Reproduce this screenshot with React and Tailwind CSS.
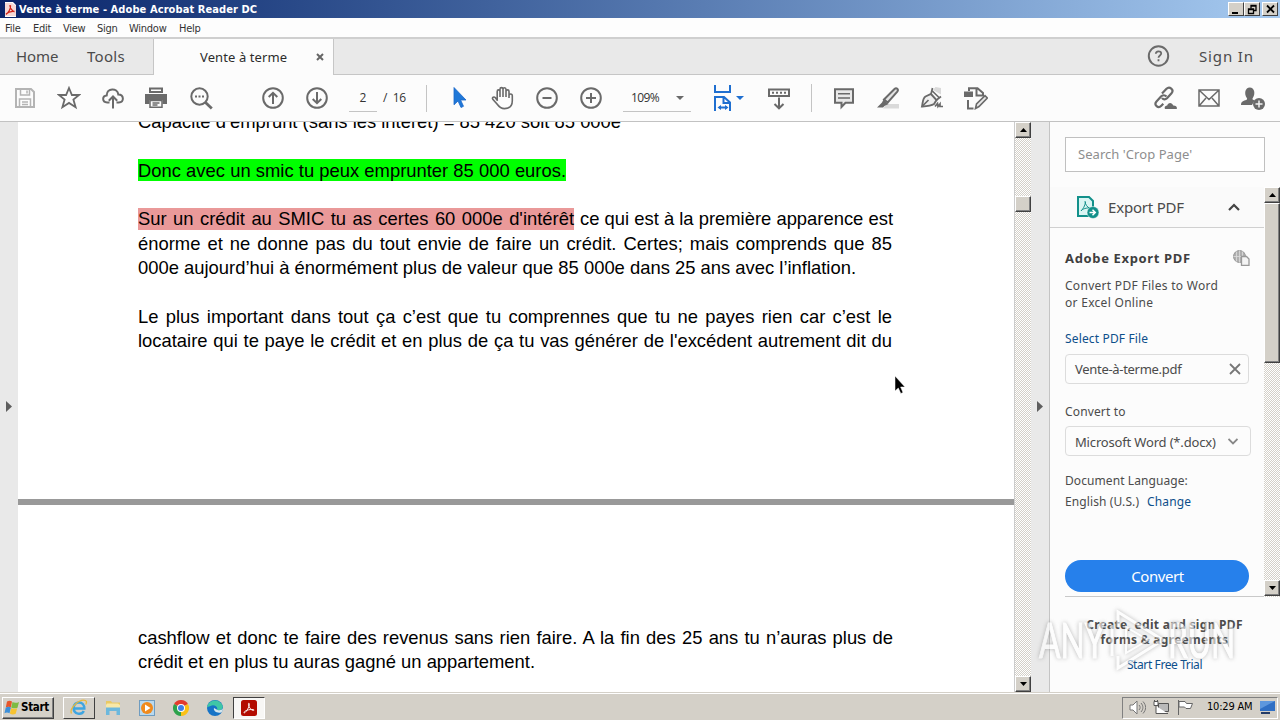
const Svg = ({ w = 24, h = 24, className = '', children }) => (
  <svg width={w} height={h} viewBox={`0 0 ${w} ${h}`} fill="none" stroke="currentColor" strokeWidth="2" className={`shrink-0 ${className}`}>
    {children}
  </svg>
)

const Slot = ({ children, className = '' }) => (
  <div className={`flex w-11 shrink-0 items-center justify-center ${className}`}>{children}</div>
)

const AcrobatMark = ({ size = 16 }) => (
  <svg width={size} height={size} viewBox="0 0 16 16" className="shrink-0">
    <rect width="16" height="16" rx="2.5" fill="#b30b00" />
    <path d="M3 12.2c1-1.5 4.8-3 9.3-2.7.9.1.9 1.1 0 1-2-.2-4.6-3-4.9-6.300-.1-1.300 1-1.300 1 0C8.300 7 5.600 11.500 4 12.600c-.6.4-1.300.2-1-.4z" fill="none" stroke="#fff" strokeWidth="0.9" />
  </svg>
)

const TitleBar = () => (
  <div className="flex h-[18px] items-center bg-gradient-to-r from-[#0a246a] to-[#a6caf0] pr-0.5 pl-1">
    <svg width="13" height="15" viewBox="0 0 13 15" className="shrink-0">
      <path d="M1 0h8l3 3v12H1z" fill="#fff" />
      <path d="M1 1h7l4 3v10H1z" fill="#f6d9d6" />
      <path d="M2 12c1.500-1.500 5-3 8.500-2.600M6 3c-.3 3 2 6 4.500 6.800M6.500 3.500C7 7 4 11 2 12.500" stroke="#d2261a" strokeWidth="1.300" fill="none" />
    </svg>
    <span className="ml-[2px] font-['DejaVu_Sans_Condensed','DejaVu_Sans',sans-serif] text-[11px] leading-none font-bold tracking-[0.090px] whitespace-nowrap text-white">
      Vente à terme - Adobe Acrobat Reader DC
    </span>
    <div className="ml-auto flex items-center">
      <WinButton>
        <path d="M3 10h6" strokeWidth="2" />
      </WinButton>
      <WinButton>
        <path d="M6 5.500V2.500h5v5H9M6 3h5" strokeWidth="1.300" />
        <path d="M3.500 6h5v4.500h-5zM3 6.500h6" strokeWidth="1.300" />
      </WinButton>
      <WinButton className="ml-0.5">
        <path d="M4 2.500l7 7M11 2.500l-7 7" strokeWidth="1.800" />
      </WinButton>
    </div>
  </div>
)

const WinButton = ({ children, className = '' }) => (
  <div className={`flex h-3.5 w-4 items-center justify-center border border-t-white border-r-[#404040] border-b-[#404040] border-l-white bg-[#d4d0c8] text-black ${className}`}>
    <svg width="14" height="12" viewBox="0 0 14 12" fill="none" stroke="currentColor" strokeWidth="1">
      {children}
    </svg>
  </div>
)

const MenuBar = () => (
  <div className="flex h-[21px] items-center border-b-2 border-[#cfcfcf] bg-[#fdfdfd] pt-0.5 font-['DejaVu_Sans_Condensed','DejaVu_Sans',sans-serif] text-[11px] leading-none tracking-[-0.25px] whitespace-nowrap text-[#333]">
    <span className="w-7 pl-[5px]">File</span>
    <span className="w-[30px] pl-[5px]">Edit</span>
    <span className="w-[34px] pl-[5px]">View</span>
    <span className="w-8 pl-[5px]">Sign</span>
    <span className="w-[50px] pl-[5px]">Window</span>
    <span className="pl-[5px]">Help</span>
  </div>
)

const TabBar = () => (
  <div className="flex h-9 shrink-0 items-stretch bg-[#e9e9e9] text-[15px] text-[#4b4b4b]">
    <div className="flex w-[154px] items-center border-r border-b border-[#c6c6c6] pl-4">
      <span className="w-[71px] tracking-[-0.1px]">Home</span>
      <span className="tracking-[0.3px]">Tools</span>
    </div>
    <div className="flex w-[179px] items-center bg-[#fcfcfc] text-[13px] text-[#2c2c2c]">
      <span className="ml-[46px] w-[88px] pt-px tracking-[0.1px] whitespace-nowrap">Vente à terme</span>
      <svg width="8" height="8" viewBox="0 0 8 8" className="ml-7 shrink-0" stroke="#666" strokeWidth="2">
        <path d="M1 1l6 6M7 1L1 7" />
      </svg>
    </div>
    <div className="flex flex-1 items-center border-b border-l border-[#c6c6c6]">
      <Svg className="-mt-0.5 ml-[812px] text-[#6a6a6a]">
        <circle cx="12.500" cy="12" r="9.700" />
        <path d="M9.800 9.800c.1-3.300 5.400-3.300 5.400-.3 0 2-2.700 2-2.700 4.300M12.500 15.200v2" strokeWidth="1.800" />
      </Svg>
      <span className="ml-[29px] text-[15px] tracking-[0.850px] whitespace-nowrap">Sign In</span>
    </div>
  </div>
)

const Caret = ({ className = '' }) => (
  <svg width="8" height="4" viewBox="0 0 8 4" className={`shrink-0 ${className}`} fill="currentColor">
    <path d="M0 0h8L4 4z" />
  </svg>
)

const Toolbar = () => (
  <div className="flex h-[47px] shrink-0 items-center border-b border-[#c2c2c2] bg-[#fcfcfc] pl-[3px] text-[#6a6a6a]">
    <Slot>
      <Svg className="text-[#b4b4b4]">
        <path d="M3 3h15l3 3v15H3z" />
        <path d="M7.500 3v6h9V3M14 4.500v3M6.500 21v-8h11v8M9 16h6M9 18.500h6" strokeWidth="1.500" />
      </Svg>
    </Slot>
    <Slot>
      <Svg>
        <path d="M12 2l2.900 7H22l-5.600 4.600 2.200 7.600L12 16.900l-6.600 4.300 2.200-7.600L2 9h7.100z" strokeWidth="1.800" />
      </Svg>
    </Slot>
    <Slot>
      <Svg>
        <path d="M8.500 16.500H6.200C.8 16.200 1 9.800 5.700 9.400 5.600 1.700 16.500 1.500 17.300 8.400c5.800.1 6.200 7.700.5 8.100h-2.300" />
        <path d="M12 22.500V11M7.800 14.800L12 10.500l4.200 4.300" />
      </Svg>
    </Slot>
    <Slot className="-ml-px mr-px">
      <Svg>
        <path d="M6 2.500h12V6H6z" />
        <path d="M1 8h22v10h-4.500v-4h-13v4H1z" fill="currentColor" stroke="none" />
        <path d="M6 14.500h12v6.700H6zM8.500 17h7M8.500 19h5" strokeWidth="1.500" />
      </Svg>
    </Slot>
    <Slot>
      <Svg>
        <circle cx="10.500" cy="10.500" r="8.200" />
        <path d="M16.500 16.500l6.300 6" strokeWidth="2.800" />
        <path d="M6 10.500h2M9.500 10.500h2M13 10.500h2" />
      </Svg>
    </Slot>
    <Slot className="ml-7">
      <Svg>
        <circle cx="12" cy="12" r="9.800" />
        <path d="M12 18V7M7.700 11L12 6.800l4.300 4.200" />
      </Svg>
    </Slot>
    <Slot>
      <Svg>
        <circle cx="12" cy="12" r="9.800" />
        <path d="M12 6v11M7.700 13l4.300 4.200 4.300-4.200" />
      </Svg>
    </Slot>
    <div className="ml-2.5 flex h-7 w-7 items-center justify-center border-b border-[#c4c4c4] font-['Open_Sans',sans-serif] text-xs text-[#333]">2</div>
    <span className="ml-[6px] w-[37px] font-['Open_Sans',sans-serif] text-xs tracking-[-0.3px] whitespace-nowrap text-[#333]">/&nbsp;&nbsp;16</span>
    <div className="ml-[6px] h-[27px] w-px bg-[#c4c4c4]" />
    <Slot className="ml-2.5">
      <Svg>
        <path d="M7 1.500v17.300l4-3.800 3 6.500 2.500-1.200-2.900-6.300H19z" fill="#2078d8" stroke="#1b67c9" strokeWidth="0.800" />
      </Svg>
    </Slot>
    <Slot>
      <Svg>
        <path d="M6.200 14.800V5.500c0-2.200 2.800-2.200 2.800 0V11M9 6V3.300c0-2.200 3-2.200 3 0V11M12 3.500c0-2.300 3-2.300 3 0V11M15 5.500c0-2.200 3-2.200 3 0V12M18 9.500c0-1.900 3.300-2.200 3.300.3v5c0 5-2.500 7.800-7.800 7.800-4 0-5.500-1.800-7.500-4.600L1.800 13.200c-1-1.700 1.200-3 2.400-1.600l2.400 3.200" strokeWidth="1.600" />
      </Svg>
    </Slot>
    <Slot>
      <Svg>
        <circle cx="12" cy="12" r="9.800" />
        <path d="M7.500 12h9" />
      </Svg>
    </Slot>
    <Slot>
      <Svg>
        <circle cx="12" cy="12" r="9.800" />
        <path d="M7 12h10M12 7v10" />
      </Svg>
    </Slot>
    <div className="ml-2.5 flex h-7 w-[68px] items-center border-b border-[#c4c4c4] pl-2 font-['Open_Sans',sans-serif] text-xs tracking-[-0.6px] text-[#333]">
      <span className="w-[45px]">109%</span>
      <Caret className="text-[#6a6a6a]" />
    </div>
    <div className="ml-[22px] flex items-center text-[#1f6fd0]">
      <Svg w={20} h={26}>
        <path d="M2 0v7h15V0M2 26V12h9l6 5.500V26M10.500 12v6H17M6 22.500h8" />
        <path d="M4.500 22.500l3.500-2.500v5zM15.500 22.500L12 20v5z" fill="currentColor" stroke="none" />
      </Svg>
      <Caret className="ml-[3px]" />
    </div>
    <Slot className="ml-[13px]">
      <Svg>
        <path d="M2 3.500h20v6.500H2z" />
        <path d="M5 6.700h2M9 6.700h2M13 6.700h2M17 6.700h2" />
        <path d="M12 11.500v11M7.500 18l4.500 4.300 4.500-4.300" />
      </Svg>
    </Slot>
    <div className="ml-2.5 h-7 w-px bg-[#c4c4c4]" />
    <Slot className="ml-2.5">
      <Svg>
        <path d="M3 3.200h18v13.600h-7.500L9.500 21v-4.200H3z" fill="#e9e9e9" />
        <path d="M6 7.700h12M6 12h12" strokeWidth="1.400" />
      </Svg>
    </Slot>
    <Slot>
      <Svg>
        <path d="M11 18h12v4.500H7z" fill="#dadada" stroke="none" />
        <path d="M8 13.500L18.500 3c2-1.800 4.500.5 2.800 2.700L11.800 16.500z" fill="#e3e3e3" />
        <path d="M7.500 13.500l5 4.500-4 2-1.500 1.500H1l5-5z" fill="currentColor" stroke="none" />
      </Svg>
    </Slot>
    <Slot>
      <Svg>
        <path d="M13 4l2.500-3 5.500 1v6.500z" fill="#dadada" stroke="none" />
        <path d="M2 20.500C3 16 2.500 12.500 5.500 10.500L11 8l5.500 6-2.500 4c-3 2-7 2.200-12 2.500z" fill="#f0f0f0" strokeWidth="1.900" />
        <path d="M2.500 20l6-6M12.500 2l-1.500 6M16.500 14l4.500-3.500M11.800 4.500l7.700 7.500" strokeWidth="1.700" />
        <path d="M15 20.500l2.500-3 .5 3 2-2.500v2.500h3" strokeWidth="1.700" />
      </Svg>
    </Slot>
    <Slot>
      <Svg>
        <rect x="0" y="5.500" width="9" height="5.500" fill="currentColor" stroke="none" />
        <path d="M5 5V2.200h8.500L19 7v2.500H12.500V3M4 14v8.500h5.500" />
        <path d="M11.500 22.500l1-4.500L21 9.700l2.300 2.300-8.300 8.500z" fill="#e9e9e9" strokeWidth="1.600" />
      </Svg>
    </Slot>
    <Slot className="ml-[145px]">
      <Svg>
        <path d="M9 7.500l4.500-4.700c3-3 8 .8 5 4.500l-4.500 5c-1.800 1.700-4 1.300-5-.3M13.500 10.500c-1.500-1.700-4-1.700-5.500 0l-4.500 5c-3 3.500 1.700 7.500 4.800 4.300l2-2" strokeWidth="2.200" />
        <path d="M12 23c-1-2 .5-3.600 2.200-3.500.7-3.500 5-3.500 6 0 2.800-.2 4.300 1.500 3.500 3.500z" fill="currentColor" stroke="none" />
      </Svg>
    </Slot>
    <Slot>
      <Svg>
        <path d="M2 4h20v16H2zM2.500 4.500L12 13.500l9.500-9M2.500 19.500L9 12M21.500 19.500L15 12" strokeWidth="1.500" />
      </Svg>
    </Slot>
    <Slot>
      <Svg>
        <path d="M0 19c0-3.500 2.500-4 5.500-5.200.8-.3.800-1 .3-1.800-3-4.500-1.600-10.600 3-10.600s6 6.100 3 10.600c-.5.8-.5 1.500.3 1.800l1.500.6L11 19z" fill="currentColor" stroke="none" />
        <circle cx="18" cy="18" r="6" fill="currentColor" stroke="none" />
        <path d="M14.500 18h7M18 14.500v7" stroke="#f4f4f4" strokeWidth="1.500" />
      </Svg>
    </Slot>
  </div>
)

const ScrollArrow = ({ up, className = '' }) => (
  <div className={`flex h-4 shrink-0 items-center justify-center border border-t-white border-r-[#404040] border-b-[#404040] border-l-white bg-[#d4d0c8] shadow-[inset_-1px_-1px_0_#808080] ${className}`}>
    <svg width="7" height="4" viewBox="0 0 7 4">
      <path d={up ? 'M0 4h7L3.500 0z' : 'M0 0h7L3.500 4z'} fill="#000" />
    </svg>
  </div>
)

const Thumb = ({ className = '' }) => (
  <div className={`shrink-0 border border-t-white border-r-[#404040] border-b-[#404040] border-l-white bg-[#d4d0c8] shadow-[inset_-1px_-1px_0_#808080] ${className}`} />
)

const Line = ({ children, className = '' }) => (
  <div className={`h-[24.35px] whitespace-nowrap [text-align-last:justify] ${className}`}>{children}</div>
)

const Document = () => (
  <div className="flex w-[996px] shrink-0 flex-col overflow-hidden bg-white font-['Liberation_Sans',Arial,sans-serif] text-[18.400px] leading-[24.350px] text-black">
    <div className="-mt-3 h-[389px] shrink-0 pl-[120px]">
      <Line className="w-[483px]">Capacité d’emprunt (sans les intérêt) = 85 420 soit 85 000e</Line>
      <Line />
      <Line className="w-[428px]">
        <span className="bg-[#00ff00] pt-[1px]">Donc avec un smic tu peux emprunter 85 000 euros.</span>
      </Line>
      <Line />
      <Line className="flex w-[755px] justify-between">
        <span className="w-[436px]">
          <span className="bg-[#ea9999] pb-[1px]">Sur un crédit au SMIC tu as certes 60 000e d'intérêt</span>
        </span>
        <span className="w-[313px]">ce qui est à la première apparence est</span>
      </Line>
      <Line className="w-[754px]">énorme et ne donne pas du tout envie de faire un crédit. Certes; mais comprends que 85</Line>
      <Line className="w-[718px]">000e aujourd’hui à énormément plus de valeur que 85 000e dans 25 ans avec l’inflation.</Line>
      <Line />
      <Line className="w-[754px]">Le plus important dans tout ça c’est que tu comprennes que tu ne payes rien car c’est le</Line>
      <Line className="w-[754px]">locataire qui te paye le crédit et en plus de ça tu vas générer de l'excédent autrement dit du</Line>
    </div>
    <div className="h-[6px] shrink-0 bg-[#999]" />
    <div className="shrink-0 pt-[121px] pl-[120px]">
      <Line className="w-[755px]">cashflow et donc te faire des revenus sans rien faire. A la fin des 25 ans tu n’auras plus de</Line>
      <Line className="w-[397px]">crédit et en plus tu auras gagné un appartement.</Line>
    </div>
  </div>
)

const Gutter = () => (
  <div className="flex w-[18px] shrink-0 items-center bg-[#e9e9e9]">
    <svg width="6" height="11" viewBox="0 0 6 11" fill="#5e5e5e" className="-mt-px ml-1.5">
      <path d="M0 0l6 5.500L0 11z" />
    </svg>
  </div>
)

const ExportPanel = () => (
  <div className="flex min-w-0 flex-1 flex-col border-l border-[#c4c4c4] bg-[#fcfcfc] text-[13px] text-[#4b4b4b]">
    <div className="mt-[15px] ml-[15px] flex h-[35px] w-[200px] shrink-0 items-center border border-[#c0c0c0] bg-white pt-px pl-3 text-[13px] tracking-[0.05px] text-[#8e8e8e]">
      Search 'Crop Page'
    </div>
    <div className="mt-[15px] flex h-[410px] shrink-0">
      <div className="flex w-[214px] flex-col">
        <div className="flex h-[41px] shrink-0 items-center border-b border-[#d0d0d0] bg-[#fafafa] pl-[26px]">
          <Svg w={24} h={24}>
            <path d="M2 2h11l4 4v15H2z" fill="#d9f5f3" stroke="#12908a" />
            <path d="M5 16c1-2 6-3.500 9-3M9 6c0 3 2 6 5 7.500M9.500 7C9 11 7 14 5 16" stroke="#12908a" strokeWidth="1" />
            <circle cx="17" cy="17.500" r="6" fill="#12908a" stroke="#fcfcfc" strokeWidth="0.500" />
            <path d="M13.500 17.500h6M16.500 14.700l2.800 2.800-2.800 2.800" stroke="#fff" strokeWidth="1.500" />
          </Svg>
          <span className="ml-[8px] w-[120px] text-[15px] tracking-[-0.2px] whitespace-nowrap">Export PDF</span>
          <svg width="12" height="8" viewBox="0 0 12 8" fill="none" stroke="#444" strokeWidth="2.200">
            <path d="M1 7l5-5 5 5" />
          </svg>
        </div>
        <div className="flex flex-col pl-[15px] leading-[17px]">
          <div className="mt-[21px] flex h-[18px] items-center">
            <span className="w-[168px] font-bold tracking-[0.650px] whitespace-nowrap text-[#3f3f3f]">Adobe Export PDF</span>
            <svg width="17" height="16" viewBox="0 0 17 16" fill="none" stroke="#999" className="shrink-0">
              <circle cx="6.500" cy="6.500" r="6" fill="#b0b0b0" />
              <path d="M.5 6.500h12M6.500.5v12M3.500 1.500v10M9.500 1.500v10" stroke="#ddd" strokeWidth="0.800" />
              <path d="M8.500 6.500h5l2.500 2.500v6.500H8.500z" fill="#f4f4f4" strokeWidth="1.300" />
            </svg>
          </div>
          <div className="mt-[10px] w-[170px] text-xs leading-[17px] tracking-[0.290px] whitespace-nowrap">
            <div>Convert PDF Files to Word</div>
            <div>or Excel Online</div>
          </div>
          <div className="mt-[19px] text-xs leading-[17px] tracking-[0.150px] text-[#0d4f8b]">Select PDF File</div>
          <div className="mt-[7px] flex h-[30px] w-[184px] items-center justify-between rounded-sm border border-[#dcdcdc] pr-[7px] pl-[9px] text-[13px] tracking-[-0.3px]">
            <span className="whitespace-nowrap">Vente-à-terme.pdf</span>
            <svg width="12" height="12" viewBox="0 0 12 12" stroke="#777" strokeWidth="1.800">
              <path d="M1 1l10 10M11 1L1 11" />
            </svg>
          </div>
          <div className="mt-[19px] text-xs leading-[17px] tracking-[0.150px]">Convert to</div>
          <div className="mt-[6px] flex h-[30px] w-[186px] items-center justify-between rounded-sm border border-[#dcdcdc] pr-[12px] pl-[9px] text-[13px] tracking-[-0.170px]">
            <span className="pt-0.5 whitespace-nowrap">Microsoft Word (*.docx)</span>
            <svg width="10" height="7" viewBox="0 0 10 7" fill="none" stroke="#888" strokeWidth="1.800">
              <path d="M.5 1L5 5.500 9.500 1" />
            </svg>
          </div>
          <div className="mt-[16px] text-xs leading-[17px] tracking-[0.080px]">Document Language:</div>
          <div className="mt-1 flex gap-2 text-xs leading-[17px] tracking-[0.1px] whitespace-nowrap">
            <span>English (U.S.)</span>
            <span className="text-[#0d4f8b]">Change</span>
          </div>
          <div className="mt-[50px] flex h-8 w-[184px] items-center justify-center rounded-full bg-[#2680eb] pl-px text-[15px] tracking-[-0.4px] text-white">
            Convert
          </div>
          <div className="mt-1 h-px bg-[#c9c9c9]" />
        </div>
      </div>
      <div className="flex flex-1 flex-col bg-[conic-gradient(#fff_25%,#d4d0c8_0_50%,#fff_0_75%,#d4d0c8_0)] bg-[length:2px_2px]">
        <ScrollArrow up />
        <Thumb className="h-[160px]" />
        <ScrollArrow className="mt-auto mb-px" />
      </div>
    </div>
    <div className="mt-5 ml-[15px] flex w-[199px] flex-col items-center text-xs leading-[15px] whitespace-nowrap">
      <span className="font-bold tracking-[0.290px]">Create, edit and sign PDF</span>
      <span className="font-bold tracking-[0.290px]">forms &amp; agreements</span>
      <span className="mt-[10px] tracking-[-0.4px] text-[#0d4f8b]">Start Free Trial</span>
    </div>
  </div>
)

const TaskButton = ({ children, className = '' }) => (
  <div className={`flex h-[22px] w-8 items-center justify-center ${className}`}>{children}</div>
)

const Taskbar = () => (
  <div className="flex h-7 shrink-0 items-center border-t border-[#d4d0c8] bg-[#d4d0c8] pt-0.5 pr-0.5 pl-0.5 font-['DejaVu_Sans_Condensed','DejaVu_Sans',sans-serif] text-[11px] text-black shadow-[inset_0_1px_0_#fff]">
    <div className="flex h-[22px] w-[52px] items-center border border-t-white border-r-[#404040] border-b-[#404040] border-l-white pl-px shadow-[inset_-1px_-1px_0_#808080]">
      <svg width="16" height="15" viewBox="0 0 16 15" className="shrink-0">
        <path d="M3 1.500c2-1.300 3.500-1 5 0L6.800 7.400C5.300 6.400 4 6.400 1.800 7.400z" fill="#e8562a" />
        <path d="M8.500 2c1.500 1 4 1.200 6.500 0l-1.500 5.700c-2 1-4.500.8-6.300-.2z" fill="#7dbb42" />
        <path d="M1.700 7.700c2-1.200 3.800-1 5.200 0l-1.400 5.600c-1.500-1-3.500-1-5 0z" fill="#3c8fd9" />
        <path d="M7.200 8c1.500 1 4 1.200 6 .2l-1.500 5.600c-2 1-4.300.8-5.800-.2z" fill="#f7c331" />
      </svg>
      <span className="pl-px text-[11.500px] font-bold tracking-[-0.3px]">Start</span>
    </div>
    <TaskButton className="ml-[9px] border border-t-white border-r-[#404040] border-b-[#404040] border-l-white">
      <svg width="18" height="17" viewBox="0 0 18 17" fill="none">
        <path d="M3.500 9.500h10.800C14.500 1.500 4 1.500 3.600 9c.2 6.500 8 7.500 10.200 3" stroke="#3fa5e0" strokeWidth="2.500" />
        <path d="M1.500 14.500C-1 10 9-.5 15.500 1.500c1.500.8 1 2.500.2 4" stroke="#e9b93a" strokeWidth="1.300" />
      </svg>
    </TaskButton>
    <TaskButton className="ml-0.5">
      <svg width="16" height="16" viewBox="0 0 16 16">
        <path d="M1 1h5l1 1.500h8V9H1z" fill="#e9c964" />
        <path d="M2 3.500h11l2 1.500v4H1V5z" fill="#f8e8a8" />
        <path d="M1 15V7.500h14V15h-3.500v-4h-7v4z" fill="#6cb8dd" />
      </svg>
    </TaskButton>
    <TaskButton className="ml-0.5">
      <svg width="16" height="16" viewBox="0 0 16 16">
        <rect x=".5" y=".5" width="15" height="15" fill="#b9d9ef" stroke="#6f9cc0" />
        <circle cx="8" cy="8" r="6" fill="#f08a1d" />
        <path d="M6 4.500l5.500 3.500L6 11.500z" fill="#fff" />
      </svg>
    </TaskButton>
    <TaskButton className="ml-0.5">
      <svg width="16" height="16" viewBox="0 0 16 16">
        <path d="M8 8L1.070 4A8 8 0 0 1 14.930 4z" fill="#e33b2e" />
        <path d="M8 8L14.930 4A8 8 0 0 1 8 16z" fill="#fbc116" />
        <path d="M8 8v8A8 8 0 0 1 1.070 4z" fill="#2da24c" />
        <circle cx="8" cy="8" r="4" fill="#fff" />
        <circle cx="8" cy="8" r="3" fill="#3f7fe8" />
      </svg>
    </TaskButton>
    <TaskButton className="ml-0.5">
      <svg width="16" height="16" viewBox="0 0 16 16">
        <circle cx="8" cy="8" r="8" fill="#1673c6" />
        <path d="M0 7.500C1 0 12-2.500 15.500 5.500c1.300 4-3 5.500-5.500 4.500 1.500-3-3-6-6.500-4C1.500 6.500.5 7 0 7.500z" fill="#3fc6a6" />
        <path d="M7 8c-1 3 3 5.500 7 4.500l1.500-1.300L16 8c-1 2-3 2.700-5.500 2z" fill="#d4e6ee" />
      </svg>
    </TaskButton>
    <TaskButton className="ml-0.5 border border-t-[#404040] border-r-white border-b-white border-l-[#404040] bg-[#f8f7f5]">
      <AcrobatMark size={16} />
    </TaskButton>
    <div className="ml-auto flex h-[22px] w-[156px] items-center border border-t-[#808080] border-r-white border-b-white border-l-[#808080] pl-[6px]">
      <svg width="17" height="15" viewBox="0 0 17 15" fill="#fff" stroke="#777" strokeWidth="1" className="shrink-0">
        <path d="M1 5h3l4-4v13l-4-4H1z" />
        <path d="M10 5c1.500 1.500 1.500 3.500 0 5M12 3c2.500 3 2.500 6 0 9M14 1.500c3.500 4 3.500 8 0 12" fill="none" />
      </svg>
      <svg width="16" height="15" viewBox="0 0 16 15" fill="#fff" stroke="#555" className="ml-[7px] shrink-0">
        <path d="M5.500 3.500h10v8h-10z" fill="#b9b9b9" />
        <path d="M1 1.500h4v4H1zM1.500 0v2M4.500 0v2M3 6v7.500h12M8 13.500h6" />
      </svg>
      <svg width="17" height="15" viewBox="0 0 17 15" fill="#fff" stroke="#666" className="ml-[8px] shrink-0">
        <path d="M1.500 0v15M2 1.500h6l1.500 2h6l-2 5H9L7.500 7H2z" />
      </svg>
      <span className="ml-[13px] w-[47px] tracking-[-0.2px] whitespace-nowrap">10:29 AM</span>
      <svg width="15" height="13" viewBox="0 0 15 13" className="ml-[6px] shrink-0">
        <path d="M0 0h15v10H0z" fill="#2f6fc4" />
        <path d="M0 0h15L0 8z" fill="#5d97dd" />
        <path d="M1 11h9v2H1z" fill="#243c68" />
      </svg>
    </div>
  </div>
)

const Watermark = () => (
  <div className="pointer-events-none absolute top-[607px] left-[1039px] flex h-[66px] w-[194px] items-center font-['Lato',sans-serif] text-[48px] leading-none text-white opacity-60 drop-shadow-[0_0_2px_#888]">
    <span className="w-[64px] origin-left scale-x-[0.66] [-webkit-text-stroke:1px_#fff]">ANY</span>
    <svg width="58" height="62" viewBox="0 0 58 62" fill="none" stroke="#fff" strokeWidth="3" className="ml-1 shrink-0">
      <path d="M11 18V3l45 28-45 28V47" />
      <path d="M19 18v26l22-13z" strokeWidth="2" />
      <path d="M5 16v31" />
    </svg>
    <span className="ml-[3px] w-[64px] origin-left scale-x-[0.66] [-webkit-text-stroke:1px_#fff]">RUN</span>
  </div>
)

export default function App() {
  return (
    <div className="relative flex h-[720px] w-[1280px] flex-col overflow-hidden bg-[#fcfcfc] font-['Noto_Sans',sans-serif]">
      <TitleBar />
      <MenuBar />
      <TabBar />
      <Toolbar />
      <div className="flex h-[570px] shrink-0 overflow-hidden">
        <Gutter />
        <Document />
        <div className="flex w-[17px] shrink-0 flex-col border-l border-[#ccc] bg-[conic-gradient(#fff_25%,#d4d0c8_0_50%,#fff_0_75%,#d4d0c8_0)] bg-[length:2px_2px]">
          <ScrollArrow up />
          <Thumb className="mt-[58px] h-4" />
          <ScrollArrow className="mt-auto" />
        </div>
        <Gutter />
        <ExportPanel />
      </div>
      <Taskbar />
      <Watermark />
      <svg width="11" height="18" viewBox="0 0 11 18" className="absolute top-[376px] left-[894px]">
        <path d="M1 0v15l3.300-3 2.500 5.500 2.200-1L6.600 11H11z" fill="#000" stroke="#fff" strokeWidth="0.500" />
      </svg>
    </div>
  )
}
